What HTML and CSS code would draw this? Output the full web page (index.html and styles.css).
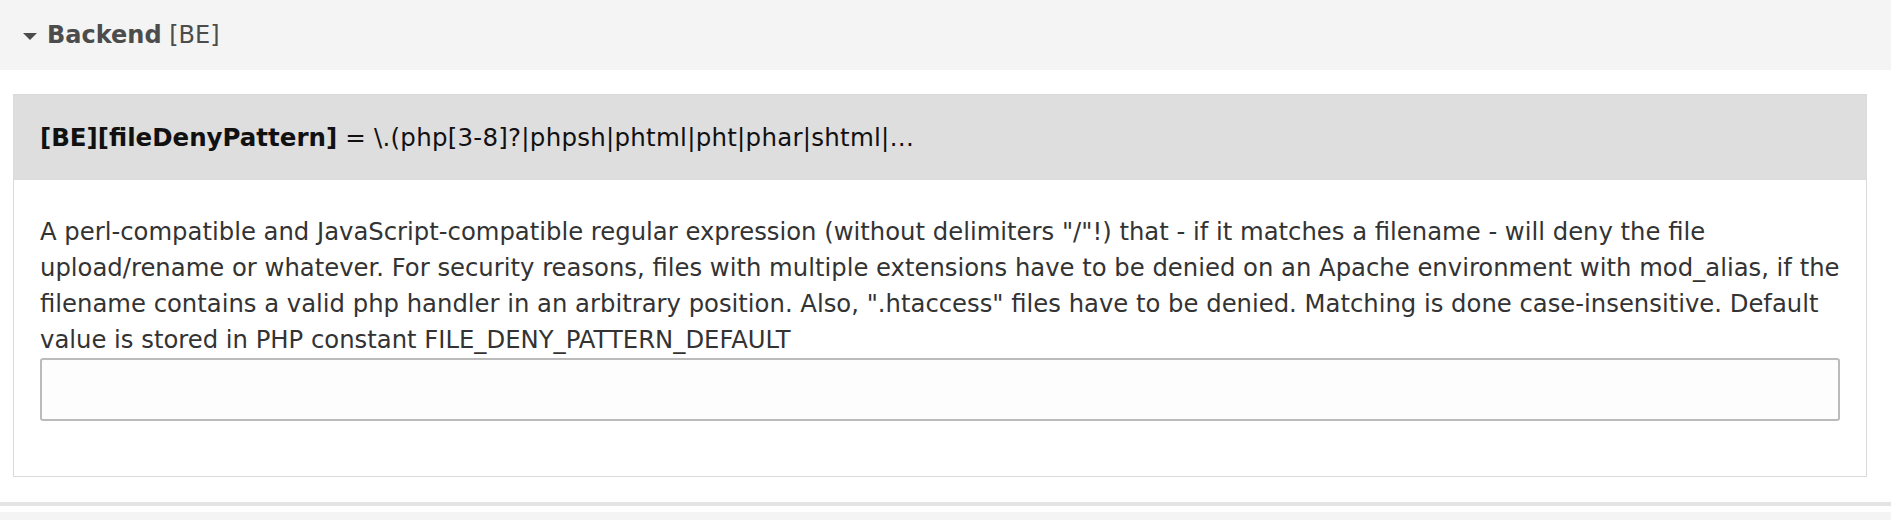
FILE: index.html
```html
<!DOCTYPE html>
<html>
<head>
<meta charset="utf-8">
<link rel="stylesheet" href="styles.css">
</head>
<body>
<div class="section-head">
  <span class="caret"></span>
  <span class="section-title"><strong>Backend</strong> [BE]</span>
</div>
<div class="section-body">
  <div class="card">
    <div class="card-head"><strong>[BE][fileDenyPattern]</strong><span class="val"> = \.(php[3-8]?|phpsh|phtml|pht|phar|shtml|…</span></div>
    <div class="card-body">
      <p class="desc">A perl-compatible and JavaScript-compatible regular expression (without delimiters "/"!) that - if it matches a filename - will deny the file<br>upload/rename or whatever. For security reasons, files with multiple extensions have to be denied on an Apache environment with mod_alias, if the<br>filename contains a valid php handler in an arbitrary position. Also, ".htaccess" files have to be denied. Matching is done case-insensitive. Default<br>value is stored in PHP constant FILE_DENY_PATTERN_DEFAULT</p>
      <input class="field" type="text" value="">
    </div>
  </div>
</div>
<div class="divider"></div>
<div class="next-head"></div>
</body>
</html>
```
FILE: styles.css
```css
html, body {
  margin: 0;
  padding: 0;
  background: #ffffff;
  font-family: "DejaVu Sans", Verdana, sans-serif;
}
.section-head {
  height: 70px;
  background: #f4f4f4;
  display: flex;
  align-items: center;
  padding-left: 23px;
  color: #4c4c4c;
  font-size: 24px;
}
.caret {
  width: 0;
  height: 0;
  border-left: 7px solid transparent;
  border-right: 7px solid transparent;
  border-top: 7px solid #4c4c4c;
  margin-right: 10px;
  margin-top: 2px;
}
.section-title strong {
  font-weight: bold;
}
.section-body {
  padding: 24px 24px 25px 13px;
}
.card {
  border: 1px solid #dadada;
}
.card-head {
  background: #dedede;
  height: 85px;
  display: flex;
  align-items: center;
  padding-left: 26px;
  font-size: 24.5px;
  color: #111;
  white-space: pre;
}
.card-head .val {
  letter-spacing: 0.25px;
}
.card-body {
  padding: 34px 26px 55px 26px;
}
.desc {
  margin: 0;
  font-size: 24.3px;
  line-height: 36px;
  color: #333;
  white-space: nowrap;
}
.field {
  display: block;
  box-sizing: border-box;
  width: 100%;
  height: 63px;
  margin: 0;
  border: 2px solid #bbbbbb;
  border-radius: 3px;
  background: #fdfdfd;
}
.divider {
  height: 4px;
  background: #e4e4e4;
  margin-bottom: 6px;
}
.next-head {
  height: 20px;
  background: #f4f4f4;
}
```
